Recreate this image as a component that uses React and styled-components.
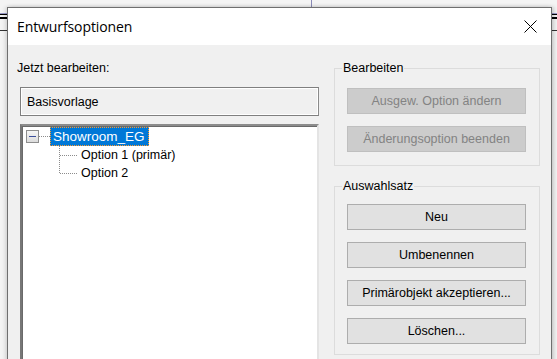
import React from "react";
import styled, { createGlobalStyle } from "styled-components";

const Global = createGlobalStyle`
  html, body { margin: 0; padding: 0; background: #f3f3f3; }
  body { width: 557px; height: 359px; overflow: hidden; }
  * { box-sizing: border-box; }
`;

const Desktop = styled.div`
  position: relative;
  width: 557px;
  height: 359px;
  overflow: hidden;
  background: #f4f4f4;
  padding: 7px 0 0 7px;
`;

const BgLines = styled.div`
  position: absolute;
  left: ${(p) => p.$left}px;
  top: 14px;
  width: ${(p) => p.$width}px;
  height: 5px;
  border-top: 1px solid #000;
  border-bottom: 2px solid #000;
  &::before {
    content: "";
    position: absolute;
    left: 0;
    right: 0;
    top: -2px;
    height: 1px;
    background: #9a9ac8;
  }
  &::after {
    content: "";
    position: absolute;
    left: 0;
    right: 0;
    top: 15px;
    height: 1px;
    background: #333;
  }
`;

const BgVLine = styled.div`
  position: absolute;
  left: 311px;
  top: 0;
  width: 1px;
  height: 7px;
  background: #8a8ab8;
`;

const Dialog = styled.div`
  position: relative;
  width: 545px;
  height: 360px;
  border: 1px solid #6f6f6f;
  border-bottom: none;
  background: #f0f0f0;
  box-shadow: -2px 0 4px rgba(0, 0, 0, 0.12), 2px 0 4px rgba(0, 0, 0, 0.18);
  display: flex;
  flex-direction: column;
`;

const TitleBar = styled.div`
  height: 37px;
  background: #ffffff;
  display: flex;
  align-items: center;
  justify-content: space-between;
  padding: 0 14px 0 9px;
  font-family: "Segoe UI", "Open Sans", "Noto Sans", sans-serif;
  font-size: 14px;
  color: #000;
  letter-spacing: -0.1px;
`;

const Close = styled.svg`
  width: 13px;
  height: 13px;
  display: block;
`;

const Body = styled.div`
  flex: 1;
  display: flex;
  gap: 15px;
  padding: 0 11px 0 12px;
  font-family: "Liberation Sans", Arial, sans-serif;
  font-size: 12.5px;
  color: #000;
`;

const LeftCol = styled.div`
  width: 299px;
  display: flex;
  flex-direction: column;
`;

const Label = styled.div`
  margin: 16px 0 0 -3px;
  height: 15px;
  line-height: 15px;
`;

const ReadBox = styled.div`
  margin-top: 11px;
  height: 29px;
  border: 1px solid #7f7f7f;
  border-right-color: #8a8a8a;
  box-shadow: inset 1px 1px 0 #ffffff, inset -1px -1px 0 #ffffff;
  background: #f0f0f0;
  display: flex;
  align-items: center;
  padding-left: 6px;
  font-size: 12.5px;
`;

const Tree = styled.div`
  margin-top: 8px;
  flex: 1;
  background: #ffffff;
  border-top: 2px solid #8c8c8c;
  border-left: 2px solid #777;
  border-right: 2px solid #e4e4e4;
  box-shadow: inset 1px 1px 0 #6a6a6a;
  padding: 1px 0 0 4px;
  display: flex;
  flex-direction: column;
`;

const RootRow = styled.div`
  height: 19px;
  display: flex;
  align-items: center;
`;

const Expander = styled.div`
  width: 13px;
  height: 13px;
  border: 1px solid #8e8e8e;
  background: linear-gradient(#f6f6f6, #dcdcdc);
  display: flex;
  align-items: center;
  justify-content: center;
  &::after {
    content: "";
    width: 7px;
    height: 1px;
    background: #3c4f9c;
  }
`;

const HDots = styled.div`
  width: ${(p) => p.$w}px;
  height: 1px;
  background-image: linear-gradient(to right, #8c8c8c 50%, transparent 50%);
  background-size: 2px 1px;
`;

const Selected = styled.div`
  height: 19px;
  padding: 0 4px 0 3px;
  background: #0078d7;
  outline: 1px dotted #ff9a2e;
  outline-offset: -1px;
  color: #fff;
  font-family: "Liberation Sans", Arial, sans-serif;
  font-size: 13.5px;
  line-height: 19px;
`;

const Children = styled.div`
  margin-left: 33px;
  display: flex;
  flex-direction: column;
`;

const ChildRow = styled.div`
  height: 18px;
  display: flex;
  align-items: center;
  font-size: 12.5px;
`;

const VDots = styled.div`
  width: 1px;
  align-self: ${(p) => (p.$last ? "flex-start" : "stretch")};
  height: ${(p) => (p.$last ? "10px" : "auto")};
  background-image: linear-gradient(to bottom, #8c8c8c 50%, transparent 50%);
  background-size: 1px 2px;
`;

const ChildText = styled.span`
  margin-left: 3px;
`;

const RightCol = styled.div`
  width: 206px;
  display: flex;
  flex-direction: column;
`;

const Group = styled.div`
  position: relative;
  margin-top: ${(p) => p.$mt}px;
  height: ${(p) => p.$h}px;
  border: 1px solid #dcdcdc;
  display: flex;
  flex-direction: column;
  gap: ${(p) => p.$gap}px;
  padding: ${(p) => p.$pt}px 13px 0 12px;
`;

const GroupTitle = styled.span`
  position: absolute;
  top: -8px;
  left: 7px;
  padding: 0 1px;
  background: #f0f0f0;
  line-height: 15px;
`;

const Button = styled.button`
  width: 179px;
  height: 26px;
  margin: 0;
  font-family: "Liberation Sans", Arial, sans-serif;
  font-size: 12.5px;
  border: 1px solid ${(p) => (p.disabled ? "#bfbfbf" : "#adadad")};
  background: ${(p) => (p.disabled ? "#cccccc" : "#e1e1e1")};
  color: ${(p) => (p.disabled ? "#838383" : "#000")};
  padding: 0;
`;

export default function App() {
  return (
    <>
      <Global />
      <Desktop>
        <BgLines $left={0} $width={7} />
        <BgLines $left={552} $width={5} />
        <BgVLine />
        <Dialog>
          <TitleBar>
            <span>Entwurfsoptionen</span>
            <Close viewBox="0 0 13 13">
              <path d="M0.5 0.5 L12.5 12.5 M12.5 0.5 L0.5 12.5" stroke="#000" strokeWidth="1" fill="none" />
            </Close>
          </TitleBar>
          <Body>
            <LeftCol>
              <Label>Jetzt bearbeiten:</Label>
              <ReadBox>Basisvorlage</ReadBox>
              <Tree>
                <RootRow>
                  <Expander />
                  <HDots $w={11} />
                  <Selected>Showroom_EG</Selected>
                </RootRow>
                <Children>
                  <ChildRow>
                    <VDots />
                    <HDots $w={18} />
                    <ChildText>Option 1 (primär)</ChildText>
                  </ChildRow>
                  <ChildRow>
                    <VDots $last />
                    <HDots $w={18} />
                    <ChildText>Option 2</ChildText>
                  </ChildRow>
                </Children>
              </Tree>
            </LeftCol>
            <RightCol>
              <Group $mt={23} $h={98} $gap={12} $pt={19}>
                <GroupTitle>Bearbeiten</GroupTitle>
                <Button disabled>Ausgew. Option ändern</Button>
                <Button disabled>Änderungsoption beenden</Button>
              </Group>
              <Group $mt={20} $h={169} $gap={12} $pt={17}>
                <GroupTitle>Auswahlsatz</GroupTitle>
                <Button>Neu</Button>
                <Button>Umbenennen</Button>
                <Button>Primärobjekt akzeptieren...</Button>
                <Button>Löschen...</Button>
              </Group>
            </RightCol>
          </Body>
        </Dialog>
      </Desktop>
    </>
  );
}
